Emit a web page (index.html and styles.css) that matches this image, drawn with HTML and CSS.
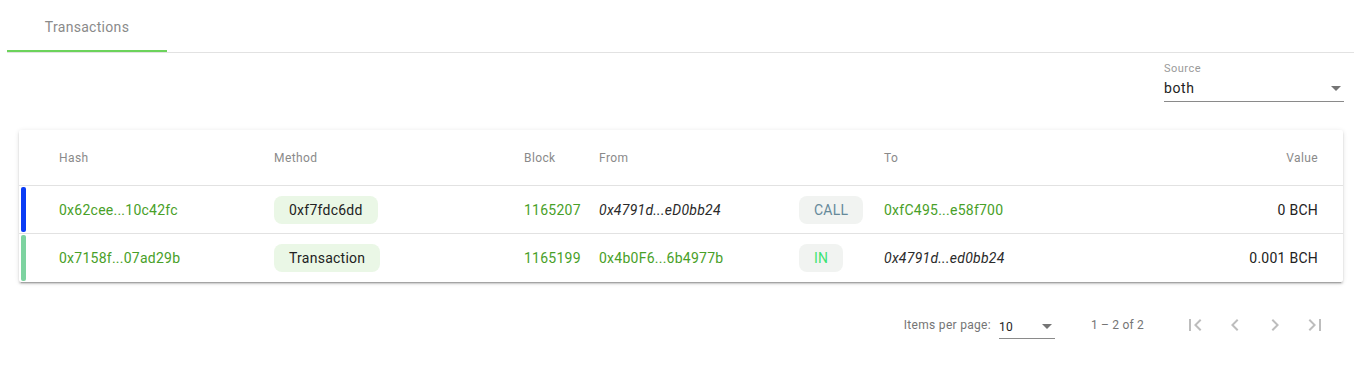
FILE: index.html
```html
<!doctype html>
<html lang="en">
<head>
    <meta charset="UTF-8">
    <title>Transactions</title>
    <link rel="stylesheet" href="styles.css">
</head>
<body>
    <div class="page">
        <div class="tabs">
            <div class="tab active">Transactions</div>
        </div>
        <div class="filters">
            <div class="field">
                <div class="field-label">Source</div>
                <div class="field-select">
                    <span>both</span>
                    <span class="caret"></span>
                </div>
            </div>
        </div>
        <div class="card">
            <div class="row head">
                <div></div>
                <div>Hash</div>
                <div>Method</div>
                <div>Block</div>
                <div>From</div>
                <div></div>
                <div>To</div>
                <div class="right">Value</div>
            </div>
            <div class="row">
                <div class="mark"><span class="bar blue"></span></div>
                <div class="link">0x62cee...10c42fc</div>
                <div><span class="chip method">0xf7fdc6dd</span></div>
                <div class="link">1165207</div>
                <div class="self">0x4791d...eD0bb24</div>
                <div><span class="chip dir call">CALL</span></div>
                <div class="link">0xfC495...e58f700</div>
                <div class="right">0 BCH</div>
            </div>
            <div class="row">
                <div class="mark"><span class="bar green"></span></div>
                <div class="link">0x7158f...07ad29b</div>
                <div><span class="chip method">Transaction</span></div>
                <div class="link">1165199</div>
                <div class="link">0x4b0F6...6b4977b</div>
                <div><span class="chip dir in">IN</span></div>
                <div class="self">0x4791d...ed0bb24</div>
                <div class="right">0.001 BCH</div>
            </div>
        </div>
        <div class="paginator">
            <span class="pg-label">Items per page:</span>
            <div class="pg-select">
                <span>10</span>
                <span class="caret"></span>
            </div>
            <span class="pg-range">1 – 2 of 2</span>
            <div class="pg-buttons">
                <span class="pg-btn"><svg viewBox="0 0 24 24"><path d="M18.41 16.59L13.82 12l4.59-4.59L17 6l-6 6 6 6zM6 6h2v12H6z"/></svg></span>
                <span class="pg-btn"><svg viewBox="0 0 24 24"><path d="M15.41 7.41L14 6l-6 6 6 6 1.41-1.41L10.83 12z"/></svg></span>
                <span class="pg-btn"><svg viewBox="0 0 24 24"><path d="M10 6L8.59 7.41 13.17 12l-4.58 4.59L10 18l6-6z"/></svg></span>
                <span class="pg-btn"><svg viewBox="0 0 24 24"><path d="M5.59 7.41L10.18 12l-4.59 4.59L7 18l6-6-6-6zM16 6h2v12h-2z"/></svg></span>
            </div>
        </div>
    </div>
</body>
</html>
```

FILE: styles.css
```css
*{
    margin: 0;
    padding: 0;
    box-sizing: border-box;
}
body{
    font-family: Roboto, "Liberation Sans", sans-serif;
    color: #222;
    background: #fff;
}
.page{
    margin: 4px 2px 0 7px;
}
.tabs{
    display: flex;
    border-bottom: 1px solid #e2e2e2;
}
.tab{
    width: 160px;
    height: 48px;
    display: flex;
    align-items: center;
    justify-content: center;
    font-size: 14px;
    letter-spacing: 0.3px;
    color: #8a8a8a;
    border-bottom: 2px solid transparent;
}
.tab.active{
    border-bottom-color: #6cd35b;
}
.filters{
    display: flex;
    justify-content: flex-end;
    padding-right: 10px;
}
.field{
    width: 180px;
    margin-top: 9px;
}
.field-label{
    font-size: 11px;
    line-height: 14px;
    letter-spacing: 0.5px;
    color: #9a9a9a;
}
.field-select{
    display: flex;
    align-items: center;
    justify-content: space-between;
    margin-top: 2px;
    height: 24px;
    padding-bottom: 3px;
    border-bottom: 1px solid #8a8a8a;
    font-size: 14px;
    letter-spacing: 0.6px;
    color: #222;
}
.caret{
    width: 0;
    height: 0;
    border-left: 5px solid transparent;
    border-right: 5px solid transparent;
    border-top: 5px solid #757575;
    margin-right: 3px;
}
.card{
    margin: 28px 11px 0 12px;
    background: #fff;
    border-radius: 2px;
    box-shadow: 0 3px 1px -2px rgba(0,0,0,.2), 0 2px 2px 0 rgba(0,0,0,.14), 0 1px 5px 0 rgba(0,0,0,.12);
}
.row{
    display: grid;
    grid-template-columns: 40px 215px 250px 75px 200px 85px 1fr auto;
    align-items: center;
    height: 48px;
    padding-right: 25px;
    border-bottom: 1px solid #e2e2e2;
    font-size: 14px;
    letter-spacing: 0.25px;
}
.row:last-child{
    border-bottom: none;
}
.row.head{
    height: 56px;
    font-size: 12px;
    letter-spacing: 0.4px;
    color: #8a8a8a;
}
.right{
    text-align: right;
}
.mark{
    align-self: stretch;
    display: flex;
    padding: 1px 0 1px 2px;
}
.bar{
    width: 5px;
    border-radius: 2px;
}
.bar.blue{
    background: #0a3cf5;
}
.bar.green{
    background: #7dd3a0;
}
.link{
    color: #48a028;
}
.self{
    font-style: italic;
    color: #2a2a2a;
}
.chip{
    display: inline-flex;
    align-items: center;
    height: 28px;
    padding: 0 15px;
    border-radius: 8px;
}
.chip.method{
    background: #eaf7e6;
    color: #222;
}
.chip.dir{
    background: #f1f3f1;
}
.chip.call{
    color: #66899a;
}
.chip.in{
    color: #3ee373;
}
.paginator{
    display: flex;
    align-items: center;
    justify-content: flex-end;
    height: 56px;
    margin: 15px 11px 0 12px;
    padding-right: 8px;
    font-size: 12px;
    letter-spacing: 0.3px;
    color: #757575;
}
.pg-select{
    display: flex;
    align-items: center;
    justify-content: space-between;
    width: 56px;
    height: 22px;
    margin: 6px 0 0 8px;
    padding-bottom: 2px;
    border-bottom: 1px solid #8a8a8a;
    color: #222;
}
.pg-range{
    margin: 0 31px 0 36px;
    letter-spacing: 0.2px;
}
.pg-buttons{
    display: flex;
}
.pg-btn{
    width: 40px;
    height: 40px;
    display: flex;
    align-items: center;
    justify-content: center;
}
.pg-btn svg{
    width: 24px;
    height: 24px;
    fill: #bdbdbd;
}
```
